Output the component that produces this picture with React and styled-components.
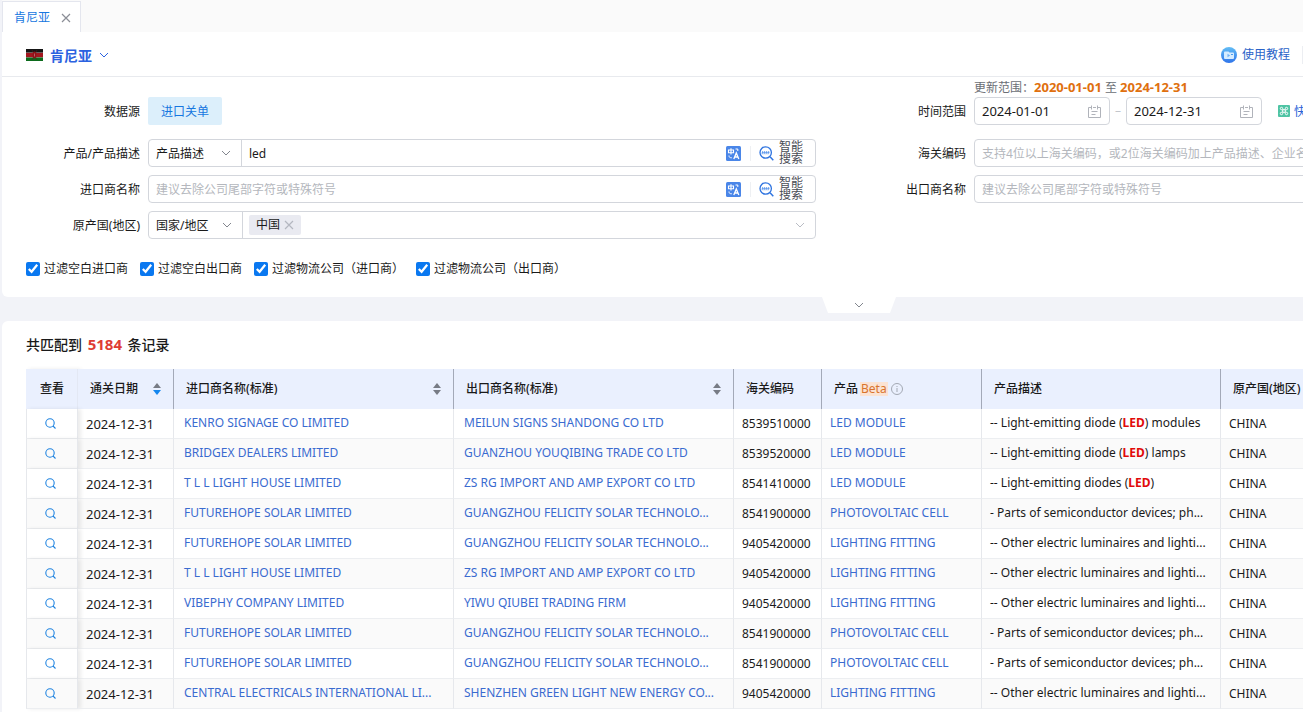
import React, { useState } from 'react';
import styled, { createGlobalStyle } from 'styled-components';

const GlobalStyle = createGlobalStyle`
	* {
		box-sizing: border-box;
	}
	body {
		margin: 0;
		background: #f2f3f8;
		color: #1a1a1a;
		font-family: 'Noto Sans', 'Noto Sans CJK SC', sans-serif;
		font-size: 12px;
		line-height: 18px;
		overflow-x: hidden;
	}
	button, input, select {
		font-family: inherit;
		font-size: inherit;
		color: inherit;
	}
	button {
		display: inline-flex;
		align-items: center;
		padding: 0;
		border: 0;
		background: none;
		cursor: pointer;
	}
	svg {
		display: block;
		flex: none;
	}
`;

const Page = styled.div`
	padding-left: 2px;
	overflow: hidden;
	height: 100vh;
`;

const TabBar = styled.div`
	display: flex;
	height: 32px;
	padding-top: 1px;
	background: #fafafa;
`;

const Tab = styled.div`
	display: flex;
	align-items: center;
	gap: 11px;
	padding: 1px 9px 0 11px;
	border: 1px solid #e4e6ee;
	border-bottom: 0;
	background: #fff;
	color: #1677e0;
`;

const Header = styled.header`
	display: flex;
	align-items: center;
	justify-content: space-between;
	height: 45px;
	padding: 2px 0 0 24px;
	background: #fff;
	border-bottom: 1px solid #e8eaee;
`;

const CountryButton = styled.button`
	gap: 7px;
	&& {
		color: #2b62e0;
		font-size: 14px;
		font-weight: 600;
	}
`;

const Tutorial = styled.a`
	display: flex;
	align-items: center;
	gap: 5px;
	padding-right: 12px;
	border-right: 1px solid #eceef2;
	color: #2a63c8;
	text-decoration: none;
`;

const Wide = styled.div`
	min-width: 1714px;
`;

const SearchPanel = styled.section`
	padding: 2px 38px 19px 24px;
	background: #fff;
	border-radius: 0 0 6px 6px;
`;

const FormGrid = styled.form`
	display: grid;
	grid-template-columns: 1fr 1fr;
	row-gap: 8px;
`;

const Field = styled.div`
	display: grid;
	grid-template-columns: 114px minmax(0, 1fr);
	align-items: end;
	gap: 8px;
	padding-right: 36px;
	margin-bottom: ${(p) => (p.$first ? '6px' : '0')};
`;

const Label = styled.label`
	line-height: 26px;
	text-align: right;
`;

const SourceButton = styled.button`
	height: 28px;
	padding: 0 13px;
	border-radius: 2px;
	&& {
		background: #dceffb;
		color: #1677e0;
	}
`;

const Box = styled.div`
	display: flex;
	align-items: center;
	height: 28px;
	border: 1px solid #d3d6dc;
	border-radius: 4px;
	background: #fff;
`;

const TextInput = styled.input`
	flex: 1;
	min-width: 0;
	height: 26px;
	padding: 0 7px;
	border: 0;
	outline: 0;
	background: transparent;
	&::placeholder {
		color: #b4b7bd;
	}
`;

const SelectWrap = styled.div`
	display: flex;
	align-items: center;
	width: ${(p) => p.$width};
	height: 26px;
	padding-right: 10px;
	border-right: 1px solid #d3d6dc;
	color: #82868e;
`;

const Select = styled.select`
	flex: 1;
	min-width: 0;
	height: 26px;
	padding: 0 0 0 7px;
	border: 0;
	outline: 0;
	appearance: none;
	background: transparent;
	&& {
		color: #1a1a1a;
	}
`;

const TranslateButton = styled.button`
	padding-right: 9px;
	border-right: 1px solid #eef0f3;
`;

const SmartButton = styled.button`
	gap: 5px;
	padding: 0 12px 0 8px;
	text-align: left;
	&& {
		color: #4a4d55;
		line-height: 12px;
	}
`;

const Tag = styled.span`
	display: flex;
	align-items: center;
	gap: 4px;
	height: 20px;
	margin-left: 6px;
	padding: 0 7px;
	border-radius: 2px;
	background: #e9eaf1;
`;

const OpenButton = styled.button`
	margin-left: auto;
	margin-right: 10px;
	&& {
		color: #b9bcc4;
	}
`;

const Note = styled.p`
	margin: 0;
	color: #6b6e75;
	b {
		color: #e0700f;
		font-size: 13px;
		line-height: 1;
	}
`;

const DateRow = styled.div`
	display: flex;
	align-items: center;
	color: #c3c6cc;
`;

const DateBox = styled(Box)`
	width: 136px;
	padding-right: 8px;
	color: #b0b3ba;
	input {
		color: #1a1a1a;
		font-size: 13px;
	}
`;

const Dash = styled.span`
	width: 16px;
	text-align: center;
`;

const QuickButton = styled.button`
	gap: 4px;
	margin-left: 16px;
	&& {
		color: #2a63d8;
	}
`;

const Checks = styled.div`
	display: flex;
	gap: 12px;
	margin-top: 21px;
`;

const CheckLabel = styled.label`
	display: flex;
	align-items: center;
	gap: 4px;
`;

const CheckBox = styled.input`
	width: 14px;
	height: 14px;
	margin: 0;
	accent-color: #0a78f0;
`;

const FoldRow = styled.div`
	display: flex;
	justify-content: center;
	height: 24px;
`;

const FoldButton = styled.button`
	justify-content: center;
	width: 74px;
	height: 16px;
	&& {
		background: #fff;
		color: #82868e;
	}
	clip-path: polygon(0 0, 100% 0, calc(100% - 6px) 100%, 6px 100%);
`;

const Results = styled.section`
	padding: 14px 24px 24px;
	background: #fff;
	border-radius: 6px 6px 0 0;
`;

const Summary = styled.h2`
	margin: 0 0 14px;
	font-size: 14px;
	font-weight: 500;
	line-height: 20px;
	b {
		margin: 0 2px;
		color: #de3c33;
		font-size: 15px;
		line-height: 1;
	}
`;

const Table = styled.table`
	width: 100%;
	table-layout: fixed;
	border-collapse: separate;
	border-spacing: 0;
`;

const Col = styled.col`
	width: ${(p) => p.$width};
`;

const Th = styled.th`
	height: 40px;
	padding: ${(p) => (p.$view ? '0 10px 0 14px' : '0 12px')};
	background: #eaf0fe;
	border-right: 1px solid ${(p) => (p.$view ? '#e3e8f4' : '#a3a9b8')};
	box-shadow: ${(p) => (p.$view ? '3px 0 4px rgba(0, 0, 0, 0.08)' : 'none')};
	font-weight: 500;
	text-align: left;
	white-space: nowrap;
`;

const HeadContent = styled.div`
	display: flex;
	align-items: center;
	justify-content: ${(p) => (p.$sortable ? 'space-between' : 'flex-start')};
`;

const Beta = styled.span`
	margin: 0 3px 0 2px;
	padding: 0 1px;
	background: #fbe3d3;
	color: #d9732c;
	font-weight: 400;
	line-height: 14px;
`;

const Row = styled.tr`
	background: ${(p) => (p.$striped ? '#fafafa' : '#fff')};
`;

const Td = styled.td`
	height: 30px;
	padding: 0 8px;
	border-right: 1px solid #e6e8ec;
	border-bottom: 1px solid #eceef1;
	overflow: hidden;
	white-space: nowrap;
	text-overflow: ellipsis;
	em {
		color: #e10a0a;
		font-style: normal;
		font-weight: 700;
	}
`;

const ViewTd = styled(Td)`
	padding: 0 10px 0 7px;
	border-left: 1px solid #e6e8ec;
	box-shadow: 3px 0 4px rgba(0, 0, 0, 0.08);
	overflow: visible;
`;

const DateTd = styled(Td)`
	font-size: 13px;
`;

const TextTd = styled(Td)`
	padding-bottom: 2px;
`;

const CompanyTd = styled(TextTd)`
	padding-left: 10px;
`;

const ViewButton = styled.button`
	margin: 0 auto;
	&& {
		display: flex;
		color: #1e83e0;
	}
`;

const CellLink = styled.a`
	color: #3a6bd0;
	text-decoration: none;
`;

const ChevronIcon = () => (
	<svg width="10" height="10" viewBox="0 0 10 10" fill="none" stroke="currentColor">
		<path d="M1 3l4 4 4-4" />
	</svg>
);

const CloseIcon = ({ size, color }) => (
	<svg width={size} height={size} viewBox="0 0 10 10" fill="none" stroke={color} strokeWidth="1.2">
		<path d="M1 1l8 8M9 1l-8 8" />
	</svg>
);

const KenyaFlag = () => (
	<svg width="17" height="12" viewBox="0 0 17 12">
		<rect width="17" height="12" fill="#c9a3a3" />
		<rect width="17" height="3.5" fill="#151515" />
		<rect y="4" width="17" height="4" fill="#a3161f" />
		<rect y="8.5" width="17" height="3.5" fill="#0c6b1c" />
		<path d="M6 1l5 10M11 1L6 11" stroke="#5d1b1b" strokeWidth="0.6" />
		<ellipse cx="8.5" cy="6" rx="1.8" ry="3.4" fill="#8f1018" />
		<path d="M8.5 4.5v3" stroke="#c99" strokeWidth="0.6" />
	</svg>
);

const TutorialIcon = () => (
	<svg width="16" height="16" viewBox="0 0 16 16">
		<defs>
			<linearGradient id="tutorial" x1="0" y1="0" x2="0" y2="1">
				<stop offset="0" stopColor="#62bdf5" />
				<stop offset="1" stopColor="#2f74ea" />
			</linearGradient>
		</defs>
		<circle cx="8" cy="8" r="8" fill="url(#tutorial)" />
		<path d="M4 4.5h3.5l1 1H12a1 1 0 0 1 1 1V11a1 1 0 0 1-1 1H4a1 1 0 0 1-1-1V5.5a1 1 0 0 1 1-1z" fill="#d5ecff" />
		<path d="M6.5 6.8v3.4l2.6-1.7z" fill="#6fb0f4" />
		<path d="M10 7.5h2" stroke="#4a9bf0" />
	</svg>
);

const TranslateIcon = () => (
	<svg width="15" height="15" viewBox="0 0 15 15" fill="none" stroke="#fff">
		<rect width="15" height="15" rx="1.5" fill="#4a86e8" stroke="none" />
		<path d="M2.5 4h5v2.7h-5zM5 2.3v6.2" strokeWidth="1.1" />
		<path d="M7.8 13l2.5-6 2.5 6M8.7 11h3.2" strokeWidth="1.3" />
		<path d="M9.5 3h2.3v2M3 9.5c0 1.8.8 2.3 2.8 2.3" />
	</svg>
);

const SmartIcon = () => (
	<svg width="15" height="15" viewBox="0 0 15 15" fill="none" stroke="#2f74e0">
		<circle cx="6.7" cy="6.5" r="5.7" strokeWidth="1.3" />
		<path d="M11 10.8l3.3 3.4" strokeWidth="1.5" />
		<path d="M3 8.3l.8-3.3M5 8.3l.8-3.3M7 8.3l.8-3.3M9 8.3l.8-3.3M2.8 6.7h7.8" stroke="#5f98ec" strokeWidth="0.9" />
	</svg>
);

const CalendarIcon = () => (
	<svg width="13" height="13" viewBox="0 0 13 13" fill="none" stroke="currentColor">
		<path d="M3 2.5H.5v10h12v-10H10M5 2.5h3M3.5.5v4M9.5.5v4M3.5 6.5h6M3.5 9.5h4" />
	</svg>
);

const QuickIcon = () => (
	<svg width="12" height="12" viewBox="0 0 12 12" fill="none" stroke="#fff">
		<rect width="12" height="12" rx="1" fill="#4fc4a4" stroke="none" />
		<path d="M4.7 4.7h2.6v2.6H4.7z" />
		<circle cx="3.5" cy="3.5" r="1.2" />
		<circle cx="8.5" cy="3.5" r="1.2" />
		<circle cx="3.5" cy="8.5" r="1.2" />
		<circle cx="8.5" cy="8.5" r="1.2" />
	</svg>
);

const SortIcon = ({ active }) => (
	<svg width="8" height="14" viewBox="0 0 8 14">
		<path d="M4 1l4 5H0z" fill="#777b85" />
		<path d="M4 13l4-5H0z" fill={active ? '#1486ee' : '#777b85'} />
	</svg>
);

const InfoIcon = () => (
	<svg width="12" height="12" viewBox="0 0 12 12" fill="none" stroke="#a3a8b3">
		<circle cx="6" cy="6" r="5.5" />
		<path d="M6 5v4M6 3v1" />
	</svg>
);

const ViewIcon = () => (
	<svg width="11" height="11" viewBox="0 0 11 11" fill="none" stroke="currentColor" strokeWidth="1.1">
		<circle cx="5" cy="5" r="4.2" />
		<path d="M8 8l2.5 2.5" />
	</svg>
);

const columns = [
	{ title: '查看', width: '52px', view: true },
	{ title: '通关日期', width: '96px', sortable: true, active: true },
	{ title: '进口商名称(标准)', width: '280px', sortable: true },
	{ title: '出口商名称(标准)', width: '280px', sortable: true },
	{ title: '海关编码', width: '88px' },
	{ title: '产品', width: '160px', beta: true },
	{ title: '产品描述', width: '239px' },
	{ title: '原产国(地区)', width: 'auto' }
];

const felicity = 'GUANGZHOU FELICITY SOLAR TECHNOLO...';
const parts = '- Parts of semiconductor devices; ph...';
const luminaires = '-- Other electric luminaires and lighti...';

const records = [
	['KENRO SIGNAGE CO LIMITED', 'MEILUN SIGNS SHANDONG CO LTD', '8539510000', 'LED MODULE', '-- Light-emitting diode (LED) modules'],
	['BRIDGEX DEALERS LIMITED', 'GUANZHOU YOUQIBING TRADE CO LTD', '8539520000', 'LED MODULE', '-- Light-emitting diode (LED) lamps'],
	['T L L LIGHT HOUSE LIMITED', 'ZS RG IMPORT AND AMP EXPORT CO LTD', '8541410000', 'LED MODULE', '-- Light-emitting diodes (LED)'],
	['FUTUREHOPE SOLAR LIMITED', felicity, '8541900000', 'PHOTOVOLTAIC CELL', parts],
	['FUTUREHOPE SOLAR LIMITED', felicity, '9405420000', 'LIGHTING FITTING', luminaires],
	['T L L LIGHT HOUSE LIMITED', 'ZS RG IMPORT AND AMP EXPORT CO LTD', '9405420000', 'LIGHTING FITTING', luminaires],
	['VIBEPHY COMPANY LIMITED', 'YIWU QIUBEI TRADING FIRM', '9405420000', 'LIGHTING FITTING', luminaires],
	['FUTUREHOPE SOLAR LIMITED', felicity, '8541900000', 'PHOTOVOLTAIC CELL', parts],
	['FUTUREHOPE SOLAR LIMITED', felicity, '8541900000', 'PHOTOVOLTAIC CELL', parts],
	['CENTRAL ELECTRICALS INTERNATIONAL LI...', 'SHENZHEN GREEN LIGHT NEW ENERGY CO...', '9405420000', 'LIGHTING FITTING', luminaires]
];

const filters = ['过滤空白进口商', '过滤空白出口商', '过滤物流公司（进口商）', '过滤物流公司（出口商）'];

const Highlight = ({ text }) =>
	text.split('LED').map((part, i) => (
		<React.Fragment key={i}>
			{i > 0 && <em>LED</em>}
			{part}
		</React.Fragment>
	));

const SearchActions = () => (
	<>
		<TranslateButton type="button" aria-label="翻译">
			<TranslateIcon />
		</TranslateButton>
		<SmartButton type="button">
			<SmartIcon />
			<span>
				智能
				<br />
				搜索
			</span>
		</SmartButton>
	</>
);

const SearchForm = () => {
	const [product, setProduct] = useState('led');
	return (
		<FormGrid>
			<Field $first>
				<Label as="span">数据源</Label>
				<div>
					<SourceButton type="button">进口关单</SourceButton>
				</div>
			</Field>
			<Field $first>
				<Label htmlFor="from">时间范围</Label>
				<div>
					<Note>
						更新范围：<b>2020-01-01</b> 至 <b>2024-12-31</b>
					</Note>
					<DateRow>
						<DateBox>
							<TextInput id="from" defaultValue="2024-01-01" />
							<CalendarIcon />
						</DateBox>
						<Dash>–</Dash>
						<DateBox>
							<TextInput aria-label="结束日期" defaultValue="2024-12-31" />
							<CalendarIcon />
						</DateBox>
						<QuickButton type="button">
							<QuickIcon />
							快捷
						</QuickButton>
					</DateRow>
				</div>
			</Field>
			<Field>
				<Label htmlFor="product">产品/产品描述</Label>
				<Box>
					<SelectWrap $width="93px">
						<Select aria-label="搜索类型">
							<option>产品描述</option>
						</Select>
						<ChevronIcon />
					</SelectWrap>
					<TextInput id="product" value={product} onChange={(e) => setProduct(e.target.value)} />
					<SearchActions />
				</Box>
			</Field>
			<Field>
				<Label htmlFor="hscode">海关编码</Label>
				<Box>
					<TextInput id="hscode" placeholder="支持4位以上海关编码，或2位海关编码加上产品描述、企业名称" />
				</Box>
			</Field>
			<Field>
				<Label htmlFor="importer">进口商名称</Label>
				<Box>
					<TextInput id="importer" placeholder="建议去除公司尾部字符或特殊符号" />
					<SearchActions />
				</Box>
			</Field>
			<Field>
				<Label htmlFor="exporter">出口商名称</Label>
				<Box>
					<TextInput id="exporter" placeholder="建议去除公司尾部字符或特殊符号" />
				</Box>
			</Field>
			<Field>
				<Label htmlFor="origin">原产国(地区)</Label>
				<Box>
					<SelectWrap $width="94px">
						<Select id="origin">
							<option>国家/地区</option>
						</Select>
						<ChevronIcon />
					</SelectWrap>
					<Tag>
						中国
						<button type="button" aria-label="移除中国">
							<CloseIcon size={10} color="#b4b7c0" />
						</button>
					</Tag>
					<OpenButton type="button" aria-label="选择国家">
						<ChevronIcon />
					</OpenButton>
				</Box>
			</Field>
		</FormGrid>
	);
};

const RecordTable = () => (
	<Table>
		<colgroup>
			{columns.map((c) => (
				<Col key={c.title} $width={c.width} />
			))}
		</colgroup>
		<thead>
			<tr>
				{columns.map((c) => (
					<Th key={c.title} $view={c.view}>
						<HeadContent $sortable={c.sortable}>
							{c.title}
							{c.sortable && (
								<button type="button" aria-label="排序">
									<SortIcon active={c.active} />
								</button>
							)}
							{c.beta && (
								<>
									<Beta>Beta</Beta>
									<InfoIcon />
								</>
							)}
						</HeadContent>
					</Th>
				))}
			</tr>
		</thead>
		<tbody>
			{records.map(([importer, exporter, code, product, description], i) => (
				<Row key={i} $striped={i % 2 === 1}>
					<ViewTd>
						<ViewButton type="button" aria-label="查看">
							<ViewIcon />
						</ViewButton>
					</ViewTd>
					<DateTd>2024-12-31</DateTd>
					<CompanyTd>
						<CellLink href="#importer">{importer}</CellLink>
					</CompanyTd>
					<CompanyTd>
						<CellLink href="#exporter">{exporter}</CellLink>
					</CompanyTd>
					<Td>{code}</Td>
					<TextTd>
						<CellLink href="#product">{product}</CellLink>
					</TextTd>
					<TextTd>
						<Highlight text={description} />
					</TextTd>
					<Td>CHINA</Td>
				</Row>
			))}
		</tbody>
	</Table>
);

const App = () => (
	<>
		<GlobalStyle />
		<Page>
			<TabBar>
				<Tab>
					肯尼亚
					<button type="button" aria-label="关闭">
						<CloseIcon size={10} color="#8b8e96" />
					</button>
				</Tab>
			</TabBar>
			<Header>
				<CountryButton type="button">
					<KenyaFlag />
					肯尼亚
					<ChevronIcon />
				</CountryButton>
				<Tutorial href="#tutorial">
					<TutorialIcon />
					使用教程
				</Tutorial>
			</Header>
			<Wide>
				<SearchPanel>
					<SearchForm />
					<Checks>
						{filters.map((text) => (
							<CheckLabel key={text}>
								<CheckBox type="checkbox" defaultChecked />
								{text}
							</CheckLabel>
						))}
					</Checks>
				</SearchPanel>
				<FoldRow>
					<FoldButton type="button" aria-label="展开">
						<ChevronIcon />
					</FoldButton>
				</FoldRow>
				<Results>
					<Summary>
						共匹配到 <b>5184</b> 条记录
					</Summary>
					<RecordTable />
				</Results>
			</Wide>
		</Page>
	</>
);

export default App;
